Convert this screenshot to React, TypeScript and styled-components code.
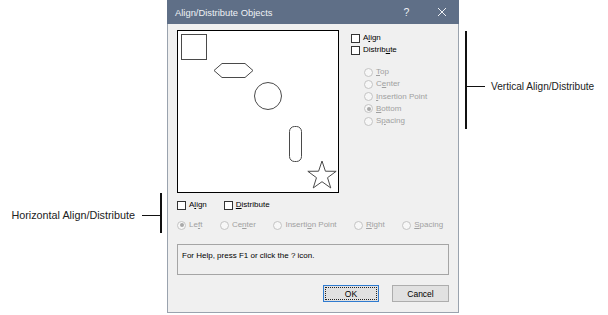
import React from "react";
import styled, { createGlobalStyle } from "styled-components";

const GlobalStyle = createGlobalStyle`
  html, body { margin: 0; padding: 0; background: #ffffff; }
  body { font-family: "Liberation Sans", Arial, sans-serif; }
`;

const Page = styled.div`
  display: grid;
  grid-template-columns: 167px 292px 1fr;
  width: 608px;
  height: 315px;
  overflow: hidden;
  background: #ffffff;
`;

const LeftNote = styled.div`
  display: flex;
  justify-content: flex-end;
  align-items: flex-start;
  padding-top: 193px;
  padding-right: 5px;
`;

const RightNote = styled.div`
  display: flex;
  align-items: flex-start;
  padding-top: 31px;
  padding-left: 6px;
`;

const NoteText = styled.span<{ $top: number; $size: number }>`
  font-family: "Liberation Sans", Arial, sans-serif;
  font-size: ${(p) => p.$size}px;
  line-height: 14px;
  color: #222;
  white-space: nowrap;
  margin-top: ${(p) => p.$top}px;
`;

const Tick = styled.span<{ $top: number; $w: number }>`
  display: block;
  width: ${(p) => p.$w}px;
  height: 1.5px;
  background: #111;
  margin-top: ${(p) => p.$top}px;
`;

const Bar = styled.span<{ $h: number }>`
  display: block;
  width: 2px;
  height: ${(p) => p.$h}px;
  background: #111;
`;

const Dialog = styled.div`
  box-sizing: border-box;
  width: 292px;
  height: 313px;
  background: #f0f0f0;
  border: 1px solid #9aa3ae;
  border-top: none;
  display: flex;
  flex-direction: column;
  font-family: "Liberation Sans", Arial, sans-serif;
  font-size: 8px;
  color: #000;
`;

const TitleBar = styled.div`
  height: 24px;
  margin: 0 -1px;
  background: #5f6f87;
  display: flex;
  align-items: center;
  color: #eef1f5;
`;

const TitleText = styled.span`
  flex: 1;
  padding-left: 8px;
  font-size: 9.4px;
`;

const CaptionButton = styled.span`
  width: 35px;
  height: 24px;
  display: flex;
  align-items: center;
  justify-content: center;
  font-size: 10.5px;
  color: #eef1f5;
`;

const Body = styled.div`
  padding: 6px 9px 0 9px;
  display: flex;
  flex-direction: column;
`;

const TopSection = styled.div`
  display: flex;
  gap: 12px;
`;

const Canvas = styled.div`
  box-sizing: border-box;
  width: 162px;
  height: 163px;
  border: 1px solid #000;
  background: #fff;
  flex: none;
`;

const SideColumn = styled.div`
  display: flex;
  flex-direction: column;
  padding-top: 2px;
`;

const Row = styled.div<{ $gap?: number }>`
  display: flex;
  align-items: center;
  gap: ${(p) => p.$gap ?? 0}px;
`;

const Item = styled.label<{ $h?: number }>`
  display: flex;
  align-items: center;
  gap: 3px;
  height: ${(p) => p.$h ?? 12}px;
  white-space: nowrap;
`;

const Box = styled.span`
  box-sizing: border-box;
  width: 9px;
  height: 9px;
  border: 1px solid #333;
  background: #fff;
  flex: none;
`;

const Radio = styled.span<{ $on?: boolean }>`
  box-sizing: border-box;
  width: 9px;
  height: 9px;
  border-radius: 50%;
  border: 1px solid #c4c4c4;
  background: #f7f7f7;
  flex: none;
  display: flex;
  align-items: center;
  justify-content: center;
  &::after {
    content: "";
    display: ${(p) => (p.$on ? "block" : "none")};
    width: 4px;
    height: 4px;
    border-radius: 50%;
    background: #a8a8a8;
  }
`;

const Label = styled.span<{ $disabled?: boolean }>`
  color: ${(p) => (p.$disabled ? "#a0a0a0" : "#000")};
  line-height: 10px;
`;

const Mn = styled.u`
  text-decoration: underline;
  text-underline-offset: 1px;
`;

const RadioGroup = styled.div`
  display: flex;
  flex-direction: column;
  padding-left: 13px;
  margin-top: 10px;
`;

const BottomChecks = styled(Row)`
  margin-top: 6px;
`;

const BottomRadios = styled(Row)`
  margin-top: 8px;
`;

const HelpBox = styled.div`
  box-sizing: border-box;
  margin-top: 13px;
  height: 31px;
  border: 1px solid #a5a5a5;
  padding: 5px 4px;
  line-height: 12px;
`;

const ButtonRow = styled.div`
  display: flex;
  justify-content: flex-end;
  gap: 13px;
  margin-top: 10px;
`;

const Button = styled.div<{ $w: number; $focus?: boolean }>`
  box-sizing: border-box;
  width: ${(p) => p.$w}px;
  height: 17px;
  background: #e1e1e1;
  border: 1px solid ${(p) => (p.$focus ? "#2f7bd0" : "#adadad")};
  padding: 1px;
  display: flex;
`;

const ButtonFace = styled.span<{ $focus?: boolean }>`
  flex: 1;
  display: flex;
  align-items: center;
  justify-content: center;
  border: 1px dotted ${(p) => (p.$focus ? "#222" : "transparent")};
  font-size: 8.5px;
`;

const Shapes = () => {
  const cx = 144;
  const cy = 144.9;
  const R = 14.9;
  const r = 5.8;
  const pts: string[] = [];
  for (let i = 0; i < 10; i++) {
    const a = -Math.PI / 2 + (i * Math.PI) / 5;
    const rad = i % 2 === 0 ? R : r;
    pts.push(`${(cx + rad * Math.cos(a)).toFixed(2)},${(cy + rad * Math.sin(a)).toFixed(2)}`);
  }
  return (
    <svg width="160" height="161" viewBox="0 0 160 161">
      <g fill="none" stroke="#4a4a4a" strokeWidth="1">
        <rect x="3.5" y="3.5" width="25" height="25" />
        <polygon points="36,39.5 44,32.5 67,32.5 75,39.5 67,46.5 44,46.5" />
        <circle cx="90" cy="65" r="13.5" />
        <rect x="111.5" y="95.5" width="12" height="35" rx="5" />
        <polygon points={pts.join(" ")} />
      </g>
    </svg>
  );
};

export default function App() {
  return (
    <>
      <GlobalStyle />
      <Page>
        <LeftNote>
          <NoteText $top={15} $size={10.8}>Horizontal Align/Distribute</NoteText>
          <Tick $top={21.5} $w={18} style={{ marginLeft: 7 }} />
          <Bar $h={40} />
        </LeftNote>

        <Dialog>
          <TitleBar>
            <TitleText>Align/Distribute Objects</TitleText>
            <CaptionButton>?</CaptionButton>
            <CaptionButton>
              <svg width="10" height="10" viewBox="0 0 10 10">
                <path d="M1 1 L9 9 M9 1 L1 9" stroke="#eef1f5" strokeWidth="1" />
              </svg>
            </CaptionButton>
          </TitleBar>
          <Body>
            <TopSection>
              <Canvas>
                <Shapes />
              </Canvas>
              <SideColumn>
                <Item>
                  <Box />
                  <Label>A<Mn>l</Mn>ign</Label>
                </Item>
                <Item>
                  <Box />
                  <Label>Distrib<Mn>u</Mn>te</Label>
                </Item>
                <RadioGroup>
                  <Item $h={12.25}>
                    <Radio />
                    <Label $disabled><Mn>T</Mn>op</Label>
                  </Item>
                  <Item $h={12.25}>
                    <Radio />
                    <Label $disabled>C<Mn>e</Mn>nter</Label>
                  </Item>
                  <Item $h={12.25}>
                    <Radio />
                    <Label $disabled><Mn>I</Mn>nsertion Point</Label>
                  </Item>
                  <Item $h={12.25}>
                    <Radio $on />
                    <Label $disabled><Mn>B</Mn>ottom</Label>
                  </Item>
                  <Item $h={12.25}>
                    <Radio />
                    <Label $disabled>S<Mn>p</Mn>acing</Label>
                  </Item>
                </RadioGroup>
              </SideColumn>
            </TopSection>

            <BottomChecks $gap={17}>
              <Item>
                <Box />
                <Label>A<Mn>l</Mn>ign</Label>
              </Item>
              <Item>
                <Box />
                <Label><Mn>D</Mn>istribute</Label>
              </Item>
            </BottomChecks>

            <BottomRadios $gap={17.5}>
              <Item>
                <Radio $on />
                <Label $disabled>Le<Mn>f</Mn>t</Label>
              </Item>
              <Item>
                <Radio />
                <Label $disabled>Ce<Mn>n</Mn>ter</Label>
              </Item>
              <Item>
                <Radio />
                <Label $disabled>Inserti<Mn>o</Mn>n Point</Label>
              </Item>
              <Item>
                <Radio />
                <Label $disabled><Mn>R</Mn>ight</Label>
              </Item>
              <Item>
                <Radio />
                <Label $disabled><Mn>S</Mn>pacing</Label>
              </Item>
            </BottomRadios>

            <HelpBox>For Help, press F1 or click the ? icon.</HelpBox>

            <ButtonRow>
              <Button $w={56} $focus>
                <ButtonFace $focus>OK</ButtonFace>
              </Button>
              <Button $w={57}>
                <ButtonFace>Cancel</ButtonFace>
              </Button>
            </ButtonRow>
          </Body>
        </Dialog>

        <RightNote>
          <Bar $h={98} />
          <Tick $top={54.5} $w={18} />
          <NoteText $top={49} $size={10.1} style={{ marginLeft: 6 }}>Vertical Align/Distribute</NoteText>
        </RightNote>
      </Page>
    </>
  );
}
